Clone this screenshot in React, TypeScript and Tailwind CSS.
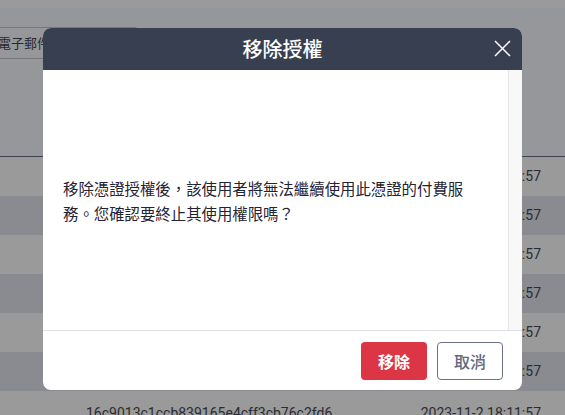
import React from "react";

const rows = [
  { dark: false },
  { dark: true },
  { dark: false },
  { dark: true },
  { dark: false },
  { dark: true },
];

export default function App() {
  const font = { fontFamily: '"Noto Sans CJK TC", "Noto Sans", sans-serif' };
  return (
    <div className="relative w-[565px] h-[415px] overflow-hidden bg-[#96979b]" style={font}>
      {/* background page (dimmed) */}
      <div className="h-[8px] bg-[#9a9a9c]" />
      <div className="h-[148px] pt-[19px] flex flex-col">
        <div className="-ml-[12px] w-[150px] h-[32px] border border-[#77787c] rounded-[3px] flex items-center pl-[9px] text-[13px] text-[#26272b]">
          電子郵件
        </div>
      </div>
      <div className="h-[1px] bg-[#3d4357]" />
      {rows.map((r, i) => (
        <div
          key={i}
          className={`h-[39px] flex items-center justify-end pr-[24px] text-[14px] text-[#2b2c30] ${r.dark ? "bg-[#8a8b90]" : "bg-[#9a9a9a]"}`}
          style={{ fontFamily: '"Roboto", "Noto Sans", sans-serif' }}
        >
          2023-11-2 18:11:57
        </div>
      ))}
      <div
        className="h-[40px] flex items-center pt-[4px] text-[14px] text-[#2b2c30] bg-[#9a9a9a]"
        style={{ fontFamily: '"Roboto", "Noto Sans", sans-serif' }}
      >
        <span className="ml-[86px]">16c9013c1ccb839165e4cff3cb76c2fd6</span>
        <span className="ml-auto mr-[24px]">2023-11-2 18:11:57</span>
      </div>

      {/* modal */}
      <div className="absolute left-[43px] top-[28px] w-[479px] h-[362px] bg-white rounded-[8px] overflow-hidden flex flex-col">
        <div className="relative h-[42px] bg-[#383f51] flex items-center justify-center">
          <span className="text-white text-[20px] font-medium leading-none">移除授權</span>
          <svg className="absolute right-[11px] top-[12px]" width="17" height="17" viewBox="0 0 17 17">
            <path d="M1 1L16 16M16 1L1 16" stroke="#ffffff" strokeWidth="1.5" fill="none" />
          </svg>
        </div>
        <div className="h-[260px] flex">
          <div className="flex-1 flex items-center pl-[20px] pr-[26px]">
            <p className="text-[15.4px] leading-[25px] text-[#1f2333] pt-[1px]">
              移除憑證授權後，該使用者將無法繼續使用此憑證的付費服務。您確認要終止其使用權限嗎？
            </p>
          </div>
          <div className="w-[14px] bg-[#f8f8f9] border-l border-[#e6e6ea]" />
        </div>
        <div className="flex-1 border-t border-[#dedeea] flex items-center justify-end gap-[10px] pr-[19px]">
          <button className="w-[66px] h-[38px] rounded-[4px] bg-[#dc3545] text-white text-[16px] font-bold">
            移除
          </button>
          <button className="w-[66px] h-[38px] rounded-[4px] border border-[#6b718c] text-[#626880] text-[16px] font-medium bg-white">
            取消
          </button>
        </div>
      </div>
    </div>
  );
}
